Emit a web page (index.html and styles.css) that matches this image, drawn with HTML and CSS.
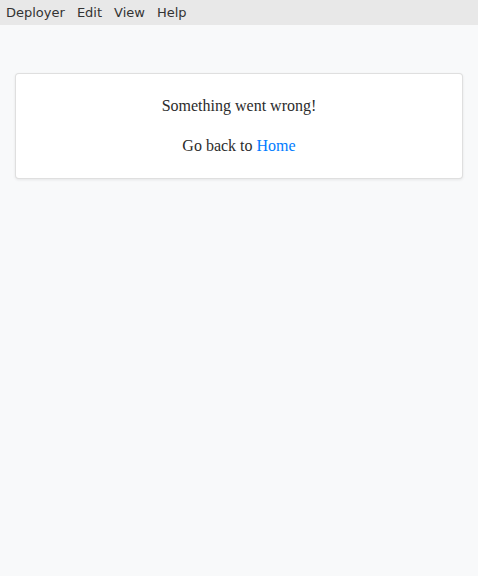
FILE: index.html
```html
<!DOCTYPE html>
<html>
<head>
<meta charset="utf-8">
<link rel="stylesheet" href="styles.css">
</head>
<body>
<nav class="menubar">
  <span class="menu-item">Deployer</span>
  <span class="menu-item">Edit</span>
  <span class="menu-item">View</span>
  <span class="menu-item">Help</span>
</nav>
<main class="content">
  <section class="card">
    <p class="msg">Something went wrong!</p>
    <p class="msg last">Go back to <a class="link" href="#">Home</a></p>
  </section>
</main>
</body>
</html>
```
FILE: styles.css
```css
html, body {
  margin: 0;
  padding: 0;
  height: 100%;
}
body {
  background: #f8f9fa;
  font-family: "Liberation Serif", serif;
  color: #2b2b2b;
}
.menubar {
  height: 25px;
  background: #e8e8e8;
  display: flex;
  align-items: center;
  font-family: "DejaVu Sans", sans-serif;
  font-size: 13px;
  color: #333;
}
.menu-item {
  padding: 0 6px;
}
.content {
  padding: 48px 15px 0;
}
.card {
  background: #fff;
  border: 1px solid rgba(0,0,0,0.125);
  border-radius: 4px;
  box-shadow: 0 1px 3px rgba(0,0,0,0.08);
  padding: 20px;
  text-align: center;
  font-size: 16px;
  line-height: 24px;
}
.msg {
  margin: 0 0 16px;
}
.msg.last {
  margin-bottom: 0;
}
.link {
  color: #007bff;
  text-decoration: none;
}
```
